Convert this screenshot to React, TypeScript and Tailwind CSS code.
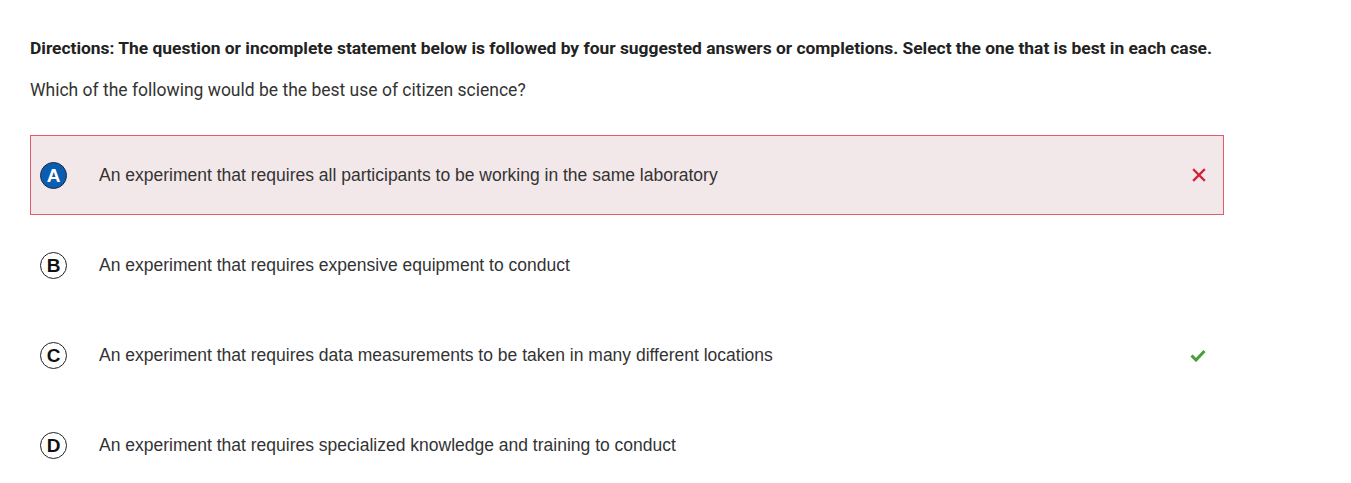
import React from 'react';

const options = [
  { letter: 'A', text: 'An experiment that requires all participants to be working in the same laboratory', state: 'wrong' },
  { letter: 'B', text: 'An experiment that requires expensive equipment to conduct', state: '' },
  { letter: 'C', text: 'An experiment that requires data measurements to be taken in many different locations', state: 'correct' },
  { letter: 'D', text: 'An experiment that requires specialized knowledge and training to conduct', state: '' },
];

export default function App() {
  return (
    <div className="min-h-screen bg-white px-[30px] pt-[36px] text-[#333]">
      <p className="font-['Roboto',sans-serif] text-[17.4px] font-bold leading-[24px] text-[#222]">
        Directions: The question or incomplete statement below is followed by four suggested answers or completions. Select the one that is best in each case.
      </p>
      <p className="mt-[18px] font-['Roboto',sans-serif] text-[17.5px] leading-[24px] text-[#333]">
        Which of the following would be the best use of citizen science?
      </p>

      <div className="mt-[33px] flex w-[1194px] flex-col gap-[10px]">
        {options.map((o) => {
          const selected = o.state === 'wrong';
          return (
            <div
              key={o.letter}
              className={
                'flex h-[80px] items-center border pl-[9px] pr-[17px] ' +
                (selected ? 'border-[#e55a6b] bg-[#f3e8e9]' : 'border-transparent')
              }
            >
              <span
                className={
                  'flex h-[27px] w-[27px] shrink-0 items-center justify-center rounded-full border-[1.5px] font-["Liberation_Sans",Arial,sans-serif] text-[19px] font-bold leading-none ' +
                  (selected ? 'border-[#1a2a40] bg-[#0a5db0] text-white' : 'border-[#222] bg-white text-[#111]')
                }
              >
                {o.letter}
              </span>
              <span className="ml-[32px] flex-1 font-['Liberation_Sans',Arial,sans-serif] text-[17.5px] text-[#333]">
                {o.text}
              </span>
              {o.state === 'wrong' && (
                <svg width="14" height="14" viewBox="0 0 14 14" className="shrink-0">
                  <path d="M2 2L12 12M12 2L2 12" stroke="#d2233c" strokeWidth="2.4" strokeLinecap="square" />
                </svg>
              )}
              {o.state === 'correct' && (
                <svg width="16" height="13" viewBox="0 0 16 13" className="shrink-0">
                  <path d="M1.5 6.5L6 11L14.5 2" stroke="#4a9d3c" strokeWidth="3" fill="none" />
                </svg>
              )}
            </div>
          );
        })}
      </div>
    </div>
  );
}
